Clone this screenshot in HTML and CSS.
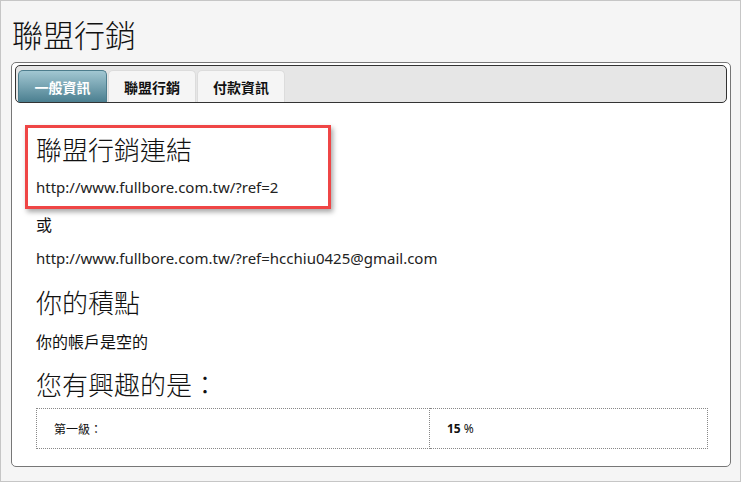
FILE: index.html
```html
<!DOCTYPE html>
<html lang="zh-Hant">
<head>
<meta charset="utf-8">
<title>聯盟行銷</title>
<link rel="stylesheet" href="styles.css">
</head>
<body>
<div class="page">
  <h1 class="title">聯盟行銷</h1>
  <div class="panel">
    <div class="tabbar">
      <div class="tab active">一般資訊</div>
      <div class="tab">聯盟行銷</div>
      <div class="tab">付款資訊</div>
    </div>
    <div class="content">
      <div class="highlight"></div>
      <h2 class="heading">聯盟行銷連結</h2>
      <p class="text url1">http://www.fullbore.com.tw/?ref=2</p>
      <p class="text cjk or">或</p>
      <p class="text url2">http://www.fullbore.com.tw/?ref=hcchiu0425@gmail.com</p>
      <h2 class="heading h-points">你的積點</h2>
      <p class="text cjk empty">你的帳戶是空的</p>
      <h2 class="heading h-interest">您有興趣的是：</h2>
      <table class="levels">
        <tr>
          <td class="c1">第一級：</td>
          <td class="c2"><b>15</b> %</td>
        </tr>
      </table>
    </div>
  </div>
</div>
</body>
</html>
```
FILE: styles.css
```css
html, body {
  margin: 0;
  padding: 0;
}
body {
  font-family: "Noto Sans", "Noto Sans CJK TC", sans-serif;
  color: #111;
}
.page {
  box-sizing: border-box;
  width: 741px;
  height: 482px;
  background: #f5f5f5;
  border: 1px solid #c6c6c6;
  overflow: hidden;
}
.title {
  margin: 16px 0 9px 0;
  padding-left: 11px;
  font-size: 31px;
  line-height: 36px;
  font-weight: 300;
  color: #111;
}
.panel {
  margin: 0 9px 0 10px;
  background: #fff;
  border: 1px solid #777;
  border-radius: 5px;
  padding: 2px 3px 0 3px;
}
.tabbar {
  display: flex;
  gap: 1px;
  height: 32px;
  padding: 4px 2px 0 2px;
  background: #e6e6e6;
  border: 1px solid #333;
  border-radius: 5px;
}
.tab {
  box-sizing: border-box;
  width: 88px;
  height: 32px;
  display: flex;
  align-items: center;
  justify-content: center;
  font-size: 14px;
  font-weight: bold;
  color: #111;
  background: #f5f5f5;
  border: 1px solid #dcdcdc;
  border-bottom: none;
  border-radius: 5px 5px 0 0;
}
.tab.active {
  width: 89px;
  color: #fff;
  background: linear-gradient(#a2c7d2, #4b7f90);
  border-color: #4d7d8d;
}
.content {
  position: relative;
  padding: 31px 21px 17px 21px;
}
.highlight {
  position: absolute;
  left: 10px;
  top: 22px;
  width: 300px;
  height: 78px;
  border: 3px solid #ef4646;
  box-shadow: 2px 3px 5px rgba(0, 0, 0, 0.35);
}
.heading {
  margin: 0;
  font-size: 26px;
  line-height: 32px;
  font-weight: 300;
  color: #111;
}
.text {
  margin: 0;
  font-size: 15px;
  line-height: 20px;
  color: #222;
}
.text.cjk {
  font-size: 16px;
  color: #111;
}
.url1 { margin-top: 11px; }
.or { margin-top: 18px; }
.url2 { margin-top: 13px; }
.h-points { margin-top: 19px; }
.empty { margin-top: 13px; }
.h-interest { margin-top: 17px; }
.levels {
  margin-top: 7px;
  width: 672px;
  border-collapse: collapse;
  border: 1px dotted #888;
  font-size: 12px;
  color: #111;
}
.levels td {
  height: 39px;
  border: 1px dotted #888;
  padding: 0 0 0 17px;
}
.levels .c1 {
  width: 375px;
}
.levels .c2 b {
  font-weight: bold;
}
```
